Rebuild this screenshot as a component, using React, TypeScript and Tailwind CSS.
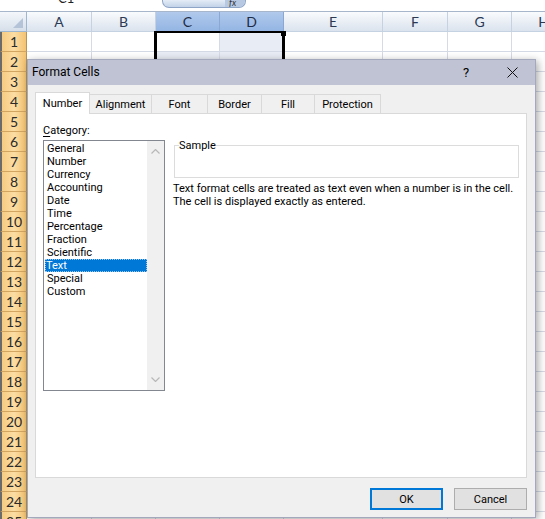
import React from "react";

const cols = [
  { l: "A", w: "w-[65px]", sel: false },
  { l: "B", w: "w-[64px]", sel: false },
  { l: "C", w: "w-[64px]", sel: true },
  { l: "D", w: "w-[64px]", sel: true },
  { l: "E", w: "w-[99px]", sel: false },
  { l: "F", w: "w-[65px]", sel: false },
  { l: "G", w: "w-[64px]", sel: false },
  { l: "H", w: "w-[64px]", sel: false },
];

const rows = Array.from({ length: 25 }, (_, i) => i + 1);

const tabs = [
  { l: "Number", w: "w-[55px]" },
  { l: "Alignment", w: "w-[62px]" },
  { l: "Font", w: "w-[56px]" },
  { l: "Border", w: "w-[54px]" },
  { l: "Fill", w: "w-[53px]" },
  { l: "Protection", w: "w-[66px]" },
];

const cats = [
  "General",
  "Number",
  "Currency",
  "Accounting",
  "Date",
  "Time",
  "Percentage",
  "Fraction",
  "Scientific",
  "Text",
  "Special",
  "Custom",
];

const ui = { fontFamily: 'Roboto, "Noto Sans", sans-serif' };
const xl = { fontFamily: 'Lato, "Open Sans", sans-serif' };

function cellTint(r: number, l: string) {
  if ((r === 1 && l === "D") || (r === 2 && (l === "C" || l === "D")))
    return "bg-[#e8ecf4]";
  return "bg-white";
}

export default function App() {
  return (
    <div className="relative w-[545px] h-[519px] overflow-hidden bg-white">
      {/* formula bar strip */}
      <div className="relative h-[12px] bg-white border-b border-[#a7b6cb] overflow-hidden" style={xl}>
        <div className="absolute left-[58px] -top-[9px] text-[13px] leading-[14px] text-[#222]">C1</div>
        <div className="absolute left-[162px] top-0 w-[84px] h-[8px] rounded-b-[7px] border border-t-0 border-[#8ea5c8] bg-gradient-to-b from-[#e4ecf7] to-[#c3d3e8] overflow-hidden">
          <div className="absolute right-0 top-0 w-[20px] h-[8px] bg-[#b7c9e2] text-[9px] leading-[6px] italic text-[#333] pl-[4px]">fx</div>
        </div>
      </div>

      {/* column header row */}
      <div className="flex h-[20px]" style={xl}>
        <div className="relative w-[27px] shrink-0 border-r border-b border-[#9eb6ce] bg-gradient-to-b from-[#f4f7fb] to-[#d6dfea]">
          <svg className="absolute right-[3px] bottom-[3px]" width="10" height="10" viewBox="0 0 10 10">
            <polygon points="10,0 10,10 0,10" fill="#b4c3d8" />
          </svg>
        </div>
        {cols.map((c) => (
          <div
            key={c.l}
            className={`${c.w} shrink-0 flex items-center justify-center border-r border-b text-[14px] ${
              c.sel
                ? "bg-gradient-to-b from-[#b0c9ec] to-[#94b5e3] border-[#8aa8d2] text-[#1e2d45]"
                : "bg-gradient-to-b from-[#f9fbfd] to-[#dbe3ee] border-[#c5d2e2] text-[#2a3a55]"
            }`}
          >
            {c.l}
          </div>
        ))}
      </div>

      {/* rows */}
      {rows.map((r) => (
        <div key={r} className="flex h-[20px]" style={xl}>
          <div className="w-[27px] shrink-0 flex items-center justify-center border-l-[2px] border-l-[#6b6b6b] border-r border-b border-r-[#b59457] border-b-[#d2a560] bg-gradient-to-r from-[#f6cb80] via-[#fbdda4] to-[#f4c370] text-[14px] text-[#2b2b2b]">
            {r}
          </div>
          {cols.map((c) => (
            <div key={c.l} className={`${c.w} shrink-0 border-r border-b border-[#d5dbe6] ${cellTint(r, c.l)}`} />
          ))}
        </div>
      ))}

      {/* selection border */}
      <div className="absolute left-[154px] top-[31px] w-[131px] h-[40px] border-l-[3px] border-r-[3px] border-t-[2px] border-black" />
      <div className="absolute left-[281px] top-[31px] w-[5px] h-[5px] bg-black" />

      {/* dialog */}
      <div
        className="absolute left-[27px] top-[59px] w-[509px] h-[459px] bg-[#f0f0f0] border border-[#a3a8bd] shadow-[2px_2px_8px_rgba(0,0,0,0.35)] text-[11px] leading-[13px] text-black"
        style={ui}
      >
        {/* title bar */}
        <div className="h-[25px] bg-[#bfc3d3] flex items-center pl-[4px]">
          <span className="text-[12px]">Format Cells</span>
          <div className="flex-1" />
          <span className="w-[20px] text-center text-[13px] mr-[31px]">?</span>
          <svg className="mr-[17px]" width="11" height="11" viewBox="0 0 11 11">
            <path d="M0.5 0.5 L10.5 10.5 M10.5 0.5 L0.5 10.5" stroke="#111" strokeWidth="1" />
          </svg>
        </div>

        {/* body */}
        <div className="px-[7px] pt-[7px]">
          {/* tabs */}
          <div className="flex items-end h-[21px]">
            {tabs.map((t, i) =>
              i === 0 ? (
                <div
                  key={t.l}
                  className={`${t.w} h-[22px] -mb-[1px] relative z-10 bg-white border border-b-0 border-[#d9d9d9] flex items-center justify-center`}
                >
                  {t.l}
                </div>
              ) : (
                <div
                  key={t.l}
                  className={`${t.w} h-[19px] bg-[#f0f0f0] border border-b-0 border-l-0 border-[#d9d9d9] flex items-center justify-center`}
                >
                  {t.l}
                </div>
              )
            )}
          </div>

          {/* panel */}
          <div className="w-[492px] h-[365px] bg-white border border-[#d9d9d9] flex pl-[7px] pt-[10px]">
            {/* left column */}
            <div className="w-[122px] flex flex-col">
              <div className="h-[13px] mb-[3px]">
                <span className="underline underline-offset-2">C</span>ategory:
              </div>
              <div className="h-[251px] border border-[#828790] flex bg-white">
                <div className="flex-1 pt-[1px] pl-[1px]">
                  {cats.map((c) =>
                    c === "Text" ? (
                      <div key={c} className="h-[13px] bg-[#0078d7] text-white pl-[1px] outline outline-1 outline-dotted outline-[#9cc9f2] -outline-offset-1">
                        {c}
                      </div>
                    ) : (
                      <div key={c} className="h-[13px] pl-[2px]">
                        {c}
                      </div>
                    )
                  )}
                </div>
                <div className="w-[17px] bg-[#f0f0f0] flex flex-col items-center justify-between py-[8px]">
                  <svg width="9" height="5" viewBox="0 0 9 5">
                    <path d="M0.5 4.5 L4.5 0.5 L8.5 4.5" stroke="#b8b8b8" fill="none" strokeWidth="1.2" />
                  </svg>
                  <svg width="9" height="5" viewBox="0 0 9 5">
                    <path d="M0.5 0.5 L4.5 4.5 L8.5 0.5" stroke="#b8b8b8" fill="none" strokeWidth="1.2" />
                  </svg>
                </div>
              </div>
            </div>

            {/* right column */}
            <div className="ml-[9px] w-[345px] flex flex-col">
              <fieldset className="h-[39px] mt-[15px] border border-[#dcdcdc] pl-[4px]">
                <legend className="px-0 leading-[13px]">Sample</legend>
              </fieldset>
              <div className="mt-[4px] -ml-[1px] leading-[13px] whitespace-nowrap">
                <div>Text format cells are treated as text even when a number is in the cell.</div>
                <div>The cell is displayed exactly as entered.</div>
              </div>
            </div>
          </div>

          {/* buttons */}
          <div className="flex justify-end gap-[11px] mt-[10px] w-[492px]">
            <button className="w-[73px] h-[22px] bg-[#e1e1e1] border-[2px] border-[#0078d7] flex items-center justify-center">
              OK
            </button>
            <button className="w-[73px] h-[22px] bg-[#e1e1e1] border border-[#adadad] flex items-center justify-center">
              Cancel
            </button>
          </div>
        </div>
      </div>
    </div>
  );
}
